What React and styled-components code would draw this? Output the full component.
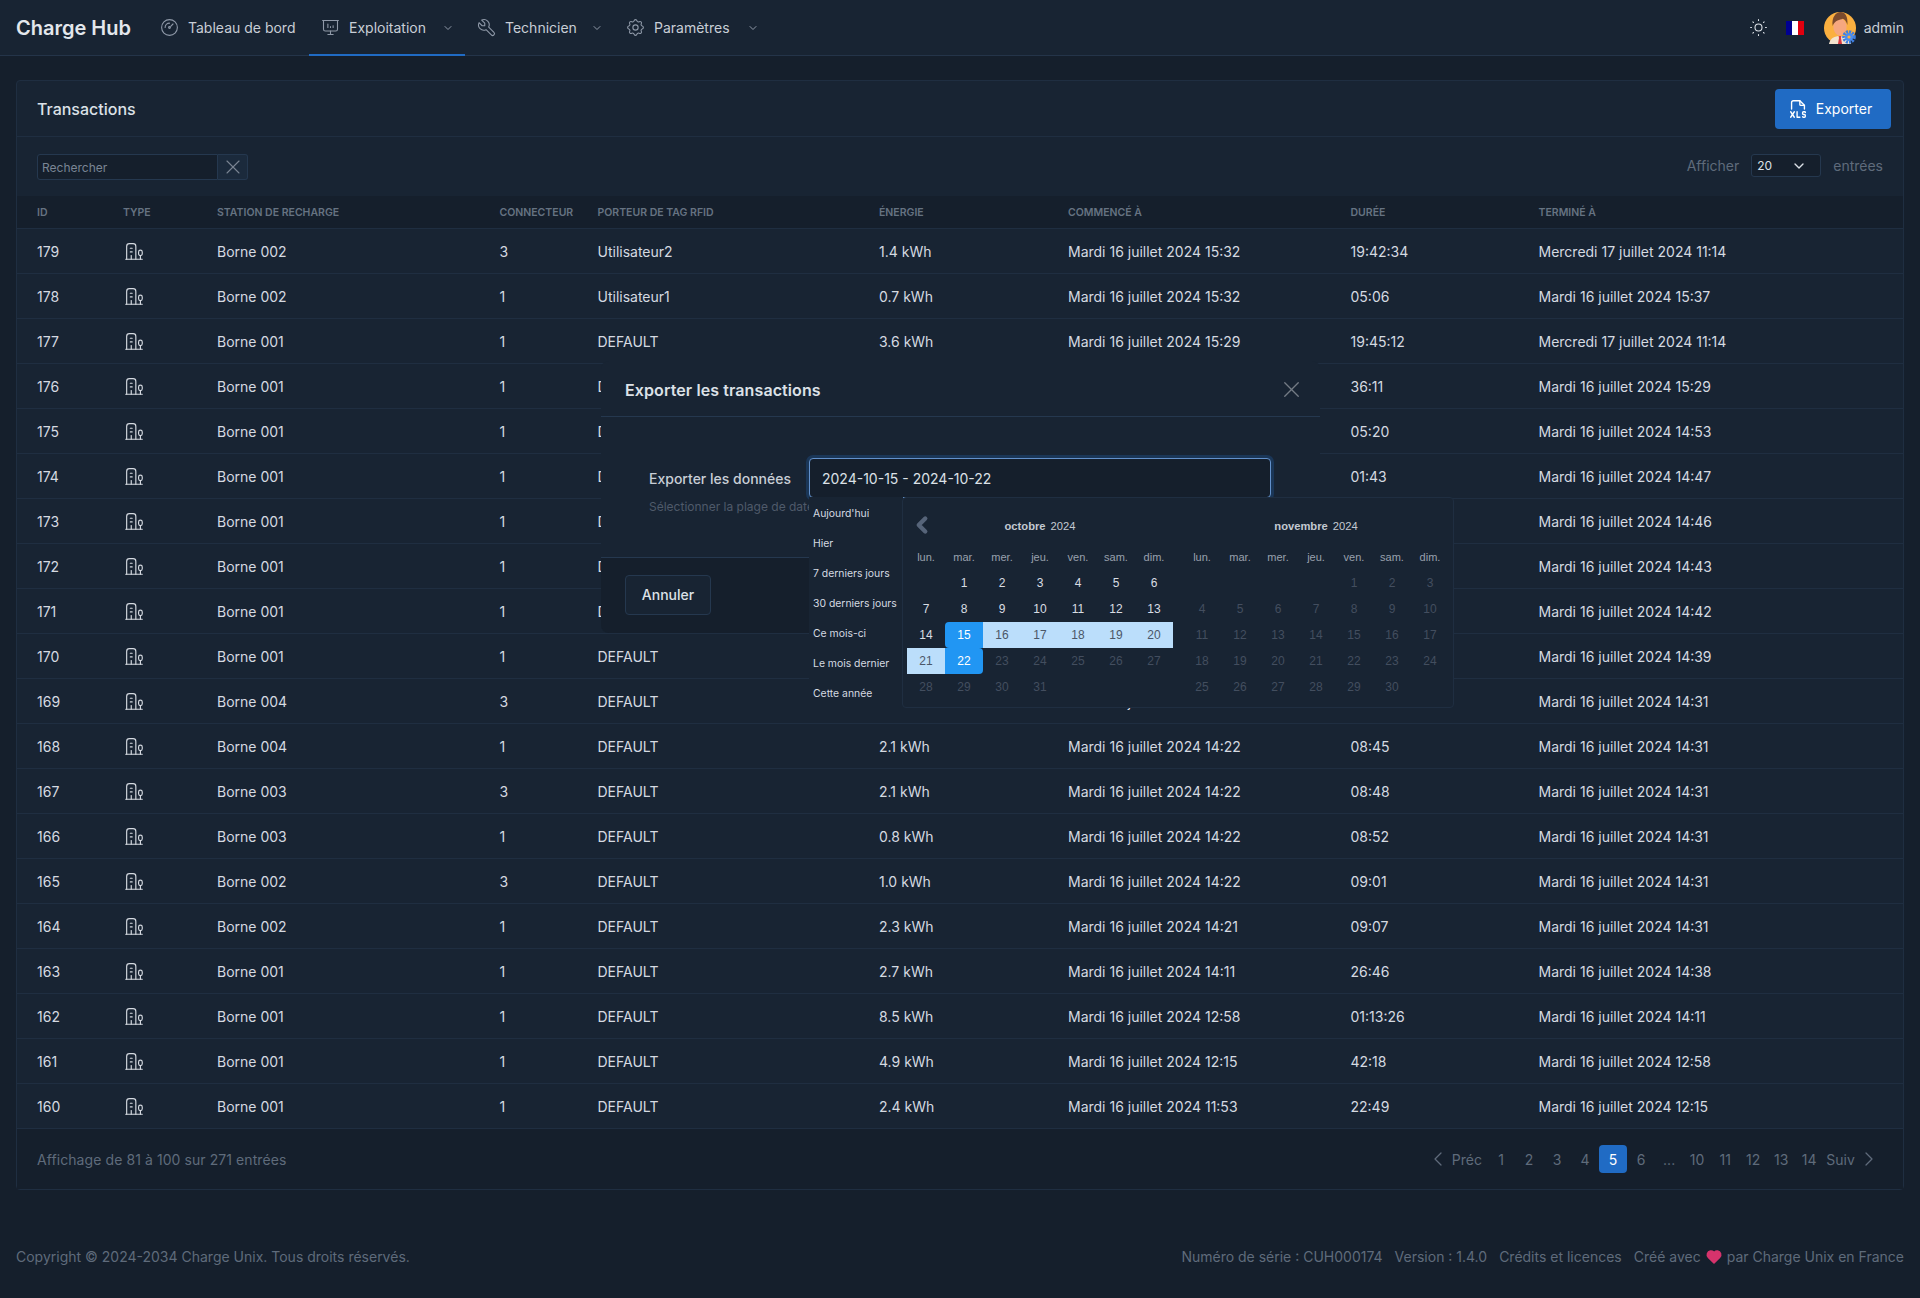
import React from 'react';
import styled, { createGlobalStyle } from 'styled-components';
import {
  TbGauge, TbPresentationAnalytics, TbTool, TbSettings, TbSun, TbChevronDown,
  TbChevronLeft, TbChevronRight, TbX, TbFileTypeXls, TbBuildingEstate, TbHeartFilled,
} from 'react-icons/tb';

const GlobalStyle = createGlobalStyle`
  * { box-sizing: border-box; }
  html, body { margin: 0; padding: 0; background: #151f2c; }
  body {
    font-family: Inter, "Noto Sans", sans-serif;
    font-size: 14px;
    color: #dce1e7;
  }
`;

const Page = styled.div`
  position: relative;
  min-height: 1298px;
  display: flex;
  flex-direction: column;
  background: #151f2c;
`;

const Navbar = styled.header`
  height: 56px;
  display: flex;
  align-items: stretch;
  padding: 0 16px;
  background: #182433;
  border-bottom: 1px solid #243449;
`;

const Logo = styled.div`
  width: 132px;
  display: flex;
  align-items: center;
  font-size: 20px;
  font-weight: 600;
  color: #e3e7ec;
`;

const NavItem = styled.a`
  height: 56px;
  display: flex;
  align-items: center;
  width: ${p => p.$width}px;
  padding: 1px 0 0 11px;
  color: #c8ced6;
  border-bottom: 2px solid ${p => (p.$active ? '#206bc4' : 'transparent')};
  svg { flex: none; color: #8f99a8; }
`;

const NavLabel = styled.span`
  margin-left: 8px;
  flex: 1;
`;

const NavChevron = styled(TbChevronDown)`
  margin-right: 11px;
`;

const NavRight = styled.div`
  margin-left: auto;
  display: flex;
  align-items: center;
  color: #c8ced6;
`;

const ThemeIcon = styled(TbSun)`
  color: #dce1e7;
`;

const Flag = styled.span`
  width: 18px;
  height: 14px;
  margin: 0 1px 0 17px;
  background: linear-gradient(90deg, #000091 33.3%, #fff 33.3%, #fff 66.6%, #e1000f 66.6%);
`;

const Avatar = styled.svg`
  width: 32px;
  height: 32px;
  margin: 0 8px 0 19px;
`;

const Content = styled.main`
  padding: 24px 16px 0;
`;

const Card = styled.section`
  background: #182433;
  border: 1px solid #1f2e41;
  border-radius: 4px;
`;

const CardHeader = styled.div`
  height: 56px;
  display: flex;
  align-items: center;
  justify-content: space-between;
  padding: 0 12px 0 20px;
  border-bottom: 1px solid #1f2e41;
`;

const CardTitle = styled.h3`
  margin: 0;
  font-size: 16px;
  font-weight: 500;
  color: #dce1e7;
`;

const PrimaryButton = styled.button`
  width: 116px;
  height: 40px;
  display: flex;
  align-items: center;
  justify-content: center;
  gap: 7px;
  padding: 0 7px 0 0;
  border: 0;
  border-radius: 4px;
  background: #206bc4;
  color: #fff;
  font: 400 14px Inter, sans-serif;
`;

const Toolbar = styled.div`
  height: 59px;
  display: flex;
  align-items: flex-start;
  justify-content: space-between;
  padding: 17px 20px 0 20px;
`;

const SearchGroup = styled.div`
  display: flex;
  width: 211px;
  height: 26px;
`;

const SearchInput = styled.div`
  flex: 1;
  display: flex;
  align-items: center;
  padding-left: 4px;
  font-size: 12px;
  color: #7a8594;
  background: #151f2c;
  border: 1px solid #25384f;
  border-radius: 3px 0 0 3px;
`;

const SearchClear = styled.div`
  width: 30px;
  display: flex;
  align-items: center;
  justify-content: center;
  color: #7a8594;
  background: #1b2a3c;
  border: 1px solid #25384f;
  border-left: 0;
  border-radius: 0 3px 3px 0;
`;

const PageSize = styled.div`
  display: flex;
  align-items: center;
  height: 23px;
  gap: 12px;
  color: #5f6b7b;
`;

const SizeSelect = styled.div`
  width: 70px;
  height: 23px;
  display: flex;
  align-items: center;
  justify-content: space-between;
  padding: 0 13px 0 5px;
  font-size: 12px;
  color: #dce1e7;
  background: #151f2c;
  border: 1px solid #25384f;
  border-radius: 3px;
`;

const columns = '86px 94px 282.5px 98px 281.5px 189px 282.5px 188px 1fr';

const HeadRow = styled.div`
  height: 33px;
  display: grid;
  grid-template-columns: ${columns};
  align-items: center;
  padding-left: 20px;
  background: #151f2c;
  border-bottom: 1px solid #1f2e41;
  font-size: 10.5px;
  font-weight: 600;
  color: #667382;
  text-transform: uppercase;
`;

const Row = styled.div`
  height: 45px;
  display: grid;
  grid-template-columns: ${columns};
  align-items: center;
  padding-left: 20px;
  border-bottom: 1px solid #1f2e41;
  color: #d5dae1;
`;

const TypeIcon = styled(TbBuildingEstate)`
  display: block;
`;

const CardFooter = styled.div`
  height: 60px;
  display: flex;
  align-items: center;
  justify-content: space-between;
  padding: 0 22px 0 20px;
  background: #151f2c;
  color: #5f6b7b;
  letter-spacing: 0.08px;
`;

const Pagination = styled.nav`
  display: flex;
  align-items: center;
  color: #5f6b7b;
`;

const PageLink = styled.span`
  min-width: 28px;
  height: 28px;
  display: flex;
  align-items: center;
  justify-content: center;
  border-radius: 4px;
  background: ${p => (p.$active ? '#206bc4' : 'transparent')};
  color: ${p => (p.$active ? '#fff' : 'inherit')};
`;

const PageEdge = styled.span`
  height: 28px;
  display: flex;
  align-items: center;
  gap: 2px;
  padding: ${p => (p.$next ? '0 0 0 3px' : '0 5px 0 0')};
`;

const Footer = styled.footer`
  display: flex;
  justify-content: space-between;
  align-items: center;
  padding: 58px 16px 0;
  color: #5f6b7b;
`;

const FooterLinks = styled.div`
  display: flex;
  align-items: center;
  gap: 12px;
`;

const Credit = styled.span`
  display: flex;
  align-items: center;
  height: 17px;
`;

const Heart = styled(TbHeartFilled)`
  color: #d6336c;
  margin: 0 4px;
`;

const Modal = styled.div`
  position: absolute;
  top: 361px;
  left: 601px;
  width: 719px;
  background: #182433;
  border-radius: 8px;
`;

const ModalHeader = styled.div`
  height: 56px;
  display: flex;
  align-items: center;
  justify-content: space-between;
  padding: 2px 15px 0 24px;
  border-bottom: 1px solid #25384f;
  color: #737b85;
`;

const ModalTitle = styled.h5`
  margin: 0;
  font-size: 16px;
  font-weight: 600;
  letter-spacing: 0.1px;
  color: #dce1e7;
`;

const ModalBody = styled.div`
  height: 140px;
  display: grid;
  grid-template-columns: 160px 462px;
  grid-template-rows: 40px auto;
  padding: 41px 0 0 48px;
`;

const FieldLabel = styled.label`
  display: flex;
  align-items: center;
  padding-top: 1px;
  font-weight: 500;
  color: #c8ced6;
`;

const DateInput = styled.div`
  display: flex;
  align-items: center;
  padding-left: 12px;
  background: #151f2c;
  border: 1px solid #6391cb;
  border-radius: 4px;
  box-shadow: 0 0 0 3px rgba(32, 107, 196, 0.25);
  color: #dce1e7;
`;

const Hint = styled.div`
  grid-column: 1 / 3;
  font-size: 12px;
  line-height: 18px;
  color: #4f5a6a;
`;

const ModalFooter = styled.div`
  height: 76px;
  display: flex;
  align-items: center;
  padding: 0 24px 2px;
  background: #151f2c;
  border-top: 1px solid #25384f;
  border-radius: 0 0 8px 8px;
`;

const GhostButton = styled.button`
  width: 86px;
  height: 40px;
  background: #182433;
  border: 1px solid #25384f;
  border-radius: 4px;
  color: #dce1e7;
  font: 500 14px Inter, sans-serif;
`;

const Ranges = styled.ul`
  position: absolute;
  top: 136px;
  left: 208px;
  width: 94px;
  height: 211px;
  margin: 0;
  padding: 1px 0 0 4px;
  list-style: none;
  background: #182433;
  font-size: 10.4px;
  color: #d5dae1;
`;

const RangeItem = styled.li`
  height: 30px;
  display: flex;
  align-items: center;
  white-space: nowrap;
`;

const Picker = styled.div`
  position: absolute;
  top: 136px;
  left: 301px;
  width: 552px;
  height: 211px;
  display: flex;
  gap: 10px;
  padding: 15px 0 0 4px;
  background: #182433;
  border: 1px solid #1f2e41;
  border-radius: 4px;
  font-family: "Liberation Sans", Arial, sans-serif;
  font-size: 12px;
`;

const PrevMonth = styled(TbChevronLeft)`
  position: absolute;
  top: 14px;
  left: 6px;
  color: #566479;
`;

const Month = styled.div`
  width: 266px;
`;

const MonthTitle = styled.div`
  height: 26px;
  margin-bottom: 5px;
  display: flex;
  align-items: center;
  justify-content: center;
  gap: 5px;
  font-size: 11.2px;
  color: #c3c9d1;
  b { font-weight: 700; }
`;

const DayGrid = styled.div`
  display: grid;
  grid-template-columns: repeat(7, 38px);
  grid-auto-rows: 26px;
`;

const DayName = styled.div`
  display: flex;
  align-items: center;
  justify-content: center;
  font-size: 11px;
  color: #98a1ae;
`;

const dayColors = {
  on: ['transparent', '#d8dde3'],
  off: ['transparent', '#434e5f'],
  range: ['#bbdefb', '#4b5768'],
  start: ['#2196f3', '#fff'],
  end: ['#2196f3', '#fff'],
};

const dayRadius = { start: '4px 0 0 4px', end: '0 4px 4px 0' };

const Day = styled.div`
  display: flex;
  align-items: center;
  justify-content: center;
  background: ${p => dayColors[p.$kind][0]};
  color: ${p => dayColors[p.$kind][1]};
  border-radius: ${p => dayRadius[p.$kind] || '0'};
`;

const dayNames = ['lun.', 'mar.', 'mer.', 'jeu.', 'ven.', 'sam.', 'dim.'];

function octoberKind(d) {
  if (d === 15) return 'start';
  if (d === 22) return 'end';
  if (d > 15 && d < 22) return 'range';
  return d < 15 ? 'on' : 'off';
}

function MonthView({ name, offset, count, kindOf }) {
  const days = Array.from({ length: count }, (_, i) => i + 1);
  return (
    <Month>
      <MonthTitle><b>{name}</b> 2024</MonthTitle>
      <DayGrid>
        {dayNames.map(n => <DayName key={n}>{n}</DayName>)}
        {Array.from({ length: offset }, (_, i) => <div key={i} />)}
        {days.map(d => <Day key={d} $kind={kindOf(d)}>{d}</Day>)}
      </DayGrid>
    </Month>
  );
}

const M = 'Mardi 16 juillet 2024';
const W = 'Mercredi 17 juillet 2024 11:14';

// cells behind the modal and the date picker can't be read in the picture, they stay empty
const rows = [
  [179, 'Borne 002', 3, 'Utilisateur2', '1.4 kWh', `${M} 15:32`, '19:42:34', W],
  [178, 'Borne 002', 1, 'Utilisateur1', '0.7 kWh', `${M} 15:32`, '05:06', `${M} 15:37`],
  [177, 'Borne 001', 1, 'DEFAULT', '3.6 kWh', `${M} 15:29`, '19:45:12', W],
  [176, 'Borne 001', 1, 'DEFAULT', '', '', '36:11', `${M} 15:29`],
  [175, 'Borne 001', 1, 'DEFAULT', '', '', '05:20', `${M} 14:53`],
  [174, 'Borne 001', 1, 'DEFAULT', '', '', '01:43', `${M} 14:47`],
  [173, 'Borne 001', 1, 'DEFAULT', '', '', '', `${M} 14:46`],
  [172, 'Borne 001', 1, 'DEFAULT', '', '', '', `${M} 14:43`],
  [171, 'Borne 001', 1, 'DEFAULT', '', '', '', `${M} 14:42`],
  [170, 'Borne 001', 1, 'DEFAULT', '', '', '', `${M} 14:39`],
  [169, 'Borne 004', 3, 'DEFAULT', '', `${M} 14:22`, '', `${M} 14:31`],
  [168, 'Borne 004', 1, 'DEFAULT', '2.1 kWh', `${M} 14:22`, '08:45', `${M} 14:31`],
  [167, 'Borne 003', 3, 'DEFAULT', '2.1 kWh', `${M} 14:22`, '08:48', `${M} 14:31`],
  [166, 'Borne 003', 1, 'DEFAULT', '0.8 kWh', `${M} 14:22`, '08:52', `${M} 14:31`],
  [165, 'Borne 002', 3, 'DEFAULT', '1.0 kWh', `${M} 14:22`, '09:01', `${M} 14:31`],
  [164, 'Borne 002', 1, 'DEFAULT', '2.3 kWh', `${M} 14:21`, '09:07', `${M} 14:31`],
  [163, 'Borne 001', 1, 'DEFAULT', '2.7 kWh', `${M} 14:11`, '26:46', `${M} 14:38`],
  [162, 'Borne 001', 1, 'DEFAULT', '8.5 kWh', `${M} 12:58`, '01:13:26', `${M} 14:11`],
  [161, 'Borne 001', 1, 'DEFAULT', '4.9 kWh', `${M} 12:15`, '42:18', `${M} 12:58`],
  [160, 'Borne 001', 1, 'DEFAULT', '2.4 kWh', `${M} 11:53`, '22:49', `${M} 12:15`],
];

const ranges = ["Aujourd'hui", 'Hier', '7 derniers jours', '30 derniers jours', 'Ce mois-ci', 'Le mois dernier', 'Cette année'];
const pages = ['1', '2', '3', '4', '5', '6', '...', '10', '11', '12', '13', '14'];

const UserAvatar = () => (
  <Avatar viewBox="0 0 32 32">
    <circle cx="16" cy="16" r="16" fill="#fbb040" />
    <path d="M5 32c1-6 6-8 11-8s10 2 11 8z" fill="#f3e3cf" />
    <path d="M14.6 24h2.8l-.4 2 1 6h-4l1-6z" fill="#d9363e" />
    <ellipse cx="16" cy="15" rx="6.6" ry="8.6" fill="#f6a77f" />
    <path d="M8.6 14C7.6 5 12 0 16.600 0c4.400 0 7.600 4 6.800 13-1-3.500-2.600-5.600-4.600-6.300-2.800 1.400-7.800 1-10.200 7.300z" fill="#7b4a2d" />
    <circle cx="25" cy="25" r="5.200" fill="none" stroke="#3f7fe0" strokeWidth="3.200" strokeDasharray="2 1" />
    <circle cx="25" cy="25" r="4" fill="#4a8df0" />
    <circle cx="25" cy="25" r="1.600" fill="#fbb040" />
  </Avatar>
);

export default function App() {
  return (
    <Page>
      <GlobalStyle />
      <Navbar>
        <Logo>Charge Hub</Logo>
        <NavItem $width={161}><TbGauge size={21} strokeWidth={1.25} /><NavLabel>Tableau de bord</NavLabel></NavItem>
        <NavItem $width={156} $active><TbPresentationAnalytics size={21} strokeWidth={1.25} /><NavLabel>Exploitation</NavLabel><NavChevron size={12} /></NavItem>
        <NavItem $width={149}><TbTool size={21} strokeWidth={1.25} /><NavLabel>Technicien</NavLabel><NavChevron size={12} /></NavItem>
        <NavItem $width={156}><TbSettings size={21} strokeWidth={1.25} /><NavLabel>Paramètres</NavLabel><NavChevron size={12} /></NavItem>
        <NavRight>
          <ThemeIcon size={21} strokeWidth={1.25} />
          <Flag />
          <UserAvatar />
          admin
        </NavRight>
      </Navbar>

      <Content>
        <Card>
          <CardHeader>
            <CardTitle>Transactions</CardTitle>
            <PrimaryButton><TbFileTypeXls size={22} strokeWidth={1.5} />Exporter</PrimaryButton>
          </CardHeader>
          <Toolbar>
            <SearchGroup>
              <SearchInput>Rechercher</SearchInput>
              <SearchClear><TbX size={24} strokeWidth={1.1} /></SearchClear>
            </SearchGroup>
            <PageSize>
              Afficher
              <SizeSelect>20<TbChevronDown size={16} /></SizeSelect>
              entrées
            </PageSize>
          </Toolbar>
          <HeadRow>
            <span>ID</span><span>Type</span><span>Station de recharge</span><span>Connecteur</span>
            <span>Porteur de tag RFID</span><span>Énergie</span><span>Commencé à</span><span>Durée</span><span>Terminé à</span>
          </HeadRow>
          {rows.map(r => (
            <Row key={r[0]}>
              <span>{r[0]}</span>
              <TypeIcon size={22} strokeWidth={1.25} />
              {r.slice(1).map((v, i) => <span key={i}>{v}</span>)}
            </Row>
          ))}
          <CardFooter>
            Affichage de 81 à 100 sur 271 entrées
            <Pagination>
              <PageEdge><TbChevronLeft size={24} strokeWidth={1.25} />Préc</PageEdge>
              {pages.map(p => <PageLink key={p} $active={p === '5'}>{p}</PageLink>)}
              <PageEdge $next>Suiv<TbChevronRight size={24} strokeWidth={1.25} /></PageEdge>
            </Pagination>
          </CardFooter>
        </Card>
      </Content>

      <Footer>
        <span>Copyright © 2024-2034 Charge Unix. Tous droits réservés.</span>
        <FooterLinks>
          <span>Numéro de série : CUH000174</span>
          <span>Version : 1.4.0</span>
          <span>Crédits et licences</span>
          <Credit>Créé avec<Heart size={18} />par Charge Unix en France</Credit>
        </FooterLinks>
      </Footer>

      <Modal>
        <ModalHeader>
          <ModalTitle>Exporter les transactions</ModalTitle>
          <TbX size={27} strokeWidth={1.2} />
        </ModalHeader>
        <ModalBody>
          <FieldLabel>Exporter les données</FieldLabel>
          <DateInput>2024-10-15 - 2024-10-22</DateInput>
          <Hint>Sélectionner la plage de dates à exporter</Hint>
        </ModalBody>
        <ModalFooter>
          <GhostButton>Annuler</GhostButton>
        </ModalFooter>
        <Ranges>
          {ranges.map(r => <RangeItem key={r}>{r}</RangeItem>)}
        </Ranges>
        <Picker>
          <PrevMonth size={26} strokeWidth={4} />
          <MonthView name="octobre" offset={1} count={31} kindOf={octoberKind} />
          <MonthView name="novembre" offset={4} count={30} kindOf={() => 'off'} />
        </Picker>
      </Modal>
    </Page>
  );
}
